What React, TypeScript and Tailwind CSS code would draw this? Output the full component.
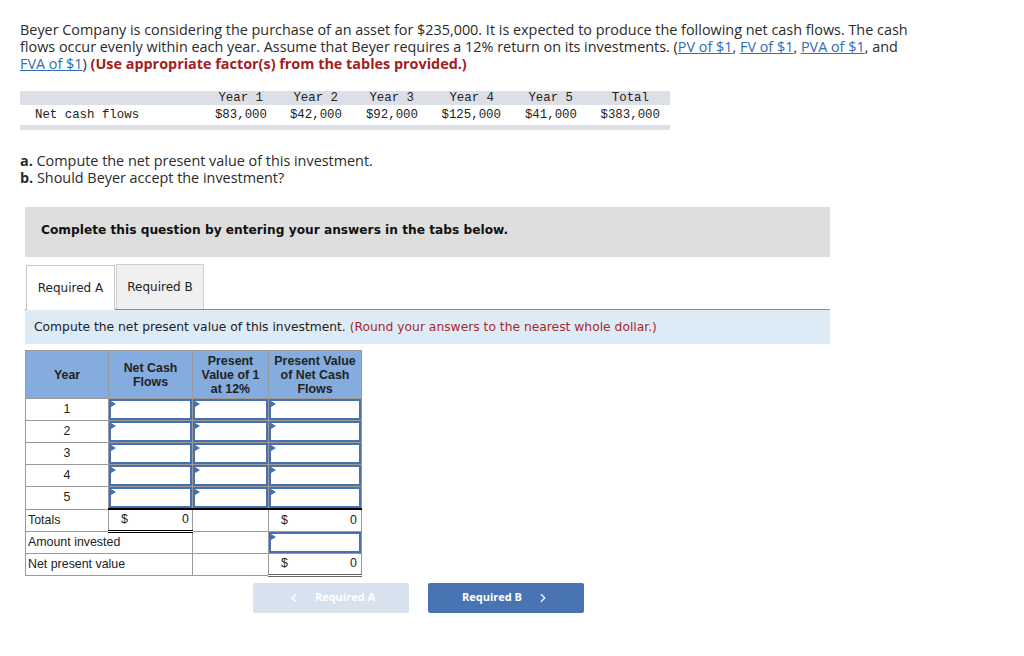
import { ChevronLeft, ChevronRight } from 'lucide-react';

const flows = [
  { year: 'Year 1', amount: '$83,000', w: 'w-[75px]', pr: 'pr-[4px]' },
  { year: 'Year 2', amount: '$42,000', w: 'w-[75px]', pr: 'pr-[4px]' },
  { year: 'Year 3', amount: '$92,000', w: 'w-[76px]', pr: 'pr-[4px]' },
  { year: 'Year 4', amount: '$125,000', w: 'w-[83px]', pr: 'pr-[7px]' },
  { year: 'Year 5', amount: '$41,000', w: 'w-[76px]', pr: 'pr-[4px]' },
  { year: 'Total', amount: '$383,000', w: 'w-[83px]', pr: 'pr-[11px]' },
];

function InputCell() {
  return (
    <td className="p-0 border border-[#9a9a9a]">
      <div className="relative h-[21px] border-2 border-[#4a6fae] bg-white">
        <span className="absolute left-0 top-0 w-0 h-0 border-t-[3px] border-b-[3px] border-l-[5px] border-t-transparent border-b-transparent border-l-[#3f70c0]" />
      </div>
    </td>
  );
}

export default function App() {
  return (
    <div className="w-[1024px] h-[656px] bg-white text-[#222] pl-[20px] pt-[21px]" style={{ fontFamily: '"Open Sans", sans-serif' }}>
      {/* Intro */}
      <p className="text-[14.4px] leading-[17px] text-[#2b2b2b]">
        Beyer Company is considering the purchase of an asset for $235,000. It is expected to produce the following net cash flows. The cash
        <br />
        flows occur evenly within each year. Assume that Beyer requires a 12% return on its investments. (
        <a className="text-[#2f6db5] underline">PV of $1</a>, <a className="text-[#2f6db5] underline">FV of $1</a>,{' '}
        <a className="text-[#2f6db5] underline">PVA of $1</a>, and
        <br />
        <a className="text-[#2f6db5] underline">FVA of $1</a>){' '}
        <span className="font-bold text-[#a3201f]">(Use appropriate factor(s) from the tables provided.)</span>
      </p>

      {/* Cash flow table */}
      <div className="mt-[19px] w-[650px] text-[12.4px] text-[#222] whitespace-pre" style={{ fontFamily: '"Liberation Mono", monospace' }}>
        <div className="flex h-[14px] leading-[14px] bg-[#dcdfe6]">
          <div className="w-[172px]" />
          {flows.map((f) => (
            <div key={f.year} className={`${f.w} ${f.pr} text-right`}>{f.year}</div>
          ))}
        </div>
        <div className="flex h-[20px] items-center">
          <div className="w-[172px] pl-[15px]">Net cash flows</div>
          {flows.map((f) => (
            <div key={f.year} className={`${f.w} text-right`}>{f.amount}</div>
          ))}
        </div>
        <div className="h-[5px] bg-[#dcdfe6]" />
      </div>

      {/* Questions */}
      <div className="mt-[22px] text-[14.4px] leading-[17px] text-[#2b2b2b]">
        <p><span className="font-bold">a.</span> Compute the net present value of this investment.</p>
        <p><span className="font-bold">b.</span> Should Beyer accept the investment?</p>
      </div>

      <div className="ml-[5px] w-[805px]" style={{ fontFamily: '"DejaVu Sans", sans-serif' }}>
        <div className="mt-[21px] h-[50px] bg-[#dedede] flex items-center pl-[16px] pb-[4px] text-[12.2px] font-bold text-[#111]">
          Complete this question by entering your answers in the tabs below.
        </div>

        {/* Tabs */}
        <div className="mt-[7px] flex items-end border-b border-[#8c8c8c]">
          <div className="w-[89px] h-[45px] ml-[1px] bg-white border border-b-0 border-[#c8c8c8] flex items-center justify-center text-[12px] text-[#222] -mb-px pb-px">
            Required A
          </div>
          <div className="w-[88px] h-[45px] ml-[1px] bg-[#f0f0f0] border border-b-0 border-[#cfcfcf] flex items-center justify-center text-[12px] text-[#222]">
            Required B
          </div>
        </div>
        <div className="h-[34px] bg-[#ddebf7] flex items-center pl-[9px] text-[12.3px] text-[#222]">
          Compute the net present value of this investment.&nbsp;
          <span className="text-[#a52a2a]">(Round your answers to the nearest whole dollar.)</span>
        </div>

        {/* NPV table */}
        <table className="mt-[6px] border-collapse text-[12.4px] text-[#222]" style={{ fontFamily: '"Liberation Sans", Arial, sans-serif' }}>
          <thead>
            <tr className="h-[48px] bg-[#84acde] font-bold leading-[14px]">
              <th className="w-[83px] border border-[#9a9a9a]">Year</th>
              <th className="w-[84px] border border-[#9a9a9a]">Net Cash<br />Flows</th>
              <th className="w-[76px] border border-[#9a9a9a]">Present<br />Value of 1<br />at 12%</th>
              <th className="w-[93px] border border-[#9a9a9a]">Present Value<br />of Net Cash<br />Flows</th>
            </tr>
          </thead>
          <tbody>
            {[1, 2, 3, 4, 5].map((y) => (
              <tr key={y} className="h-[22px]">
                <td className="border border-[#9a9a9a] text-center">{y}</td>
                <InputCell />
                <InputCell />
                <InputCell />
              </tr>
            ))}
            <tr className="h-[22px]">
              <td className="border border-[#9a9a9a] pl-[2px]">Totals</td>
              <td className="border border-[#9a9a9a] border-t-2 border-t-black border-b-[3px] border-b-black border-double pl-[12px] pr-[3px]">
                <div className="flex justify-between"><span>$</span><span>0</span></div>
              </td>
              <td className="border border-[#9a9a9a] border-t-2 border-t-black" />
              <td className="border border-[#9a9a9a] border-t-2 border-t-black pl-[12px] pr-[4px]">
                <div className="flex justify-between"><span>$</span><span>0</span></div>
              </td>
            </tr>
            <tr className="h-[22px]">
              <td colSpan={2} className="border border-[#9a9a9a] pl-[2px]">Amount invested</td>
              <td className="border border-[#9a9a9a]" />
              <InputCell />
            </tr>
            <tr className="h-[22px]">
              <td colSpan={2} className="border border-[#9a9a9a] pl-[2px]">Net present value</td>
              <td className="border border-[#9a9a9a]" />
              <td className="border border-[#9a9a9a] border-b-[3px] border-b-[#666] border-double pl-[12px] pr-[4px]">
                <div className="flex justify-between"><span>$</span><span>0</span></div>
              </td>
            </tr>
          </tbody>
        </table>

        {/* Navigation */}
        <div className="mt-[6px] flex gap-[19px] pl-[228px] text-[11px] font-bold text-white" style={{ fontFamily: '"Open Sans", sans-serif' }}>
          <div className="w-[156px] h-[30px] bg-[#d8e2ef] rounded-[2px] flex items-center justify-center gap-[14px]">
            <ChevronLeft className="w-[14px] h-[14px]" strokeWidth={2} />
            <span>Required A</span>
          </div>
          <div className="w-[156px] h-[30px] bg-[#4874b4] rounded-[2px] flex items-center justify-center gap-[14px]">
            <span>Required B</span>
            <ChevronRight className="w-[14px] h-[14px]" strokeWidth={2} />
          </div>
        </div>
      </div>
    </div>
  );
}
